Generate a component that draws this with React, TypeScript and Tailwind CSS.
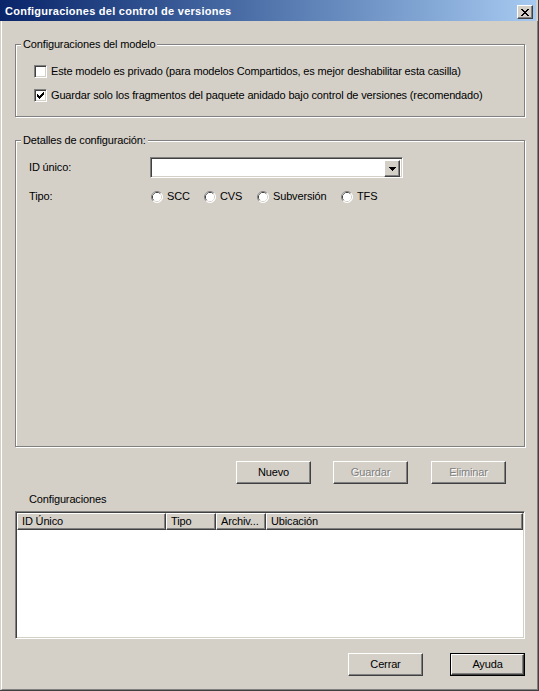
import React from "react";

const raised =
  "border border-t-white border-l-white border-r-[#404040] border-b-[#404040] shadow-[inset_-1px_-1px_0_#808080]";
const sunken =
  "border border-t-[#808080] border-l-[#808080] border-r-white border-b-white shadow-[inset_1px_1px_0_#404040,inset_-1px_-1px_0_#d4d0c8]";

// pixel glyphs drawn as rows of rects
function PixelGlyph({ rows, color = "#000" }: { rows: string[]; color?: string }) {
  const w = rows[0].length;
  const h = rows.length;
  return (
    <svg width={w} height={h} viewBox={`0 0 ${w} ${h}`} shapeRendering="crispEdges">
      {rows.flatMap((r, y) =>
        r.split("").map((c, x) =>
          c === "X" ? <rect key={`${x}-${y}`} x={x} y={y} width={1} height={1} fill={color} /> : null
        )
      )}
    </svg>
  );
}

const closeX = ["XX....XX", ".XX..XX.", "..XXXX..", "...XX...", "..XXXX..", ".XX..XX.", "XX....XX"];
const tick = ["......X", ".....XX", "X...XXX", "XX.XXX.", "XXXXX..", ".XXX...", "..X...."];
const arrow = ["XXXXXXX", ".XXXXX.", "..XXX..", "...X..."];

function Checkbox({ checked }: { checked?: boolean }) {
  return (
    <div className={`w-[13px] h-[13px] bg-white flex items-center justify-center shrink-0 ${sunken}`}>
      {checked && <PixelGlyph rows={tick} />}
    </div>
  );
}

function Radio() {
  return (
    <svg width="12" height="12" viewBox="0 0 12 12" className="shrink-0">
      <circle cx="6" cy="6" r="5.5" fill="#fff" />
      <path d="M2.11 9.89 A5.5 5.5 0 0 1 9.89 2.11" stroke="#808080" fill="none" />
      <path d="M9.89 2.11 A5.5 5.5 0 0 1 2.11 9.89" stroke="#fff" fill="none" />
      <path d="M2.82 9.18 A4.5 4.5 0 0 1 9.18 2.82" stroke="#404040" fill="none" />
      <path d="M9.18 2.82 A4.5 4.5 0 0 1 2.82 9.18" stroke="#d4d0c8" fill="none" />
      <circle cx="6" cy="6" r="4" fill="#fff" />
    </svg>
  );
}

function Button({ label, disabled, isDefault }: { label: string; disabled?: boolean; isDefault?: boolean }) {
  const inner = (
    <div
      className={`flex-1 flex items-center justify-center ${raised} ${
        disabled ? "text-[#808080] [text-shadow:1px_1px_0_#fff]" : "text-black"
      }`}
    >
      {label}
    </div>
  );
  return (
    <div className={`w-[75px] h-[23px] flex ${isDefault ? "border border-black" : ""}`}>{inner}</div>
  );
}

function GroupBox({
  legend,
  className,
  children,
}: {
  legend: string;
  className: string;
  children: React.ReactNode;
}) {
  return (
    <div
      className={`relative ml-[13px] w-[510px] border border-[#808080] shadow-[inset_1px_1px_0_#fff,1px_1px_0_#fff] ${className}`}
    >
      <span className="absolute -top-[7px] left-[5px] px-[2px] bg-[#d4d0c8] leading-[13px]">{legend}</span>
      {children}
    </div>
  );
}

export default function App() {
  return (
    <div className="w-[539px] h-[691px] bg-[#d4d0c8] flex flex-col border-r border-b border-r-[#404040] border-b-[#404040] font-['Liberation_Sans',Arial,sans-serif] text-[11px] leading-[13px] tracking-[-0.15px] text-black">
      {/* title bar */}
      <div className="h-[21px] mr-[2px] flex items-start bg-linear-to-r from-[#0a246a] to-[#a6caf0] pl-[5px] pr-[3px]">
        <span className="flex-1 font-bold text-white mt-[5px] tracking-[0.25px]">
          Configuraciones del control de versiones
        </span>
        <div className={`w-[16px] h-[14px] mt-[5px] bg-[#d4d0c8] flex items-center justify-center ${raised}`}>
          <PixelGlyph rows={closeX} />
        </div>
      </div>

      <div className="flex-1 flex flex-col ml-px border-l border-white border-r border-b border-r-[#808080] border-b-[#808080]">
        <GroupBox legend="Configuraciones del modelo" className="mt-[23px] h-[73px] pt-[20px] pl-[18px]">
          <div className="flex flex-col gap-[11px]">
            <div className="h-[13px] flex items-center gap-[4px]">
              <Checkbox />
              <span>Este modelo es privado (para modelos Compartidos, es mejor deshabilitar esta casilla)</span>
            </div>
            <div className="h-[13px] flex items-center gap-[4px]">
              <Checkbox checked />
              <span>Guardar solo los fragmentos del paquete anidado bajo control de versiones (recomendado)</span>
            </div>
          </div>
        </GroupBox>

        <GroupBox legend="Detalles de configuración:" className="mt-[23px] h-[307px] pt-[16px] pl-[13px]">
          <div className="h-[21px] flex items-center">
            <span className="w-[121px]">ID único:</span>
            <div className={`w-[253px] h-[21px] bg-white flex justify-end p-[2px] ${sunken}`}>
              <div className={`w-[16px] h-[17px] bg-[#d4d0c8] flex items-center justify-center ${raised}`}>
                <PixelGlyph rows={arrow} />
              </div>
            </div>
          </div>
          <div className="mt-[12px] h-[13px] flex items-center">
            <span className="w-[122px]">Tipo:</span>
            <div className="w-[53px] flex items-center gap-[4px]">
              <Radio />
              <span>SCC</span>
            </div>
            <div className="w-[53px] flex items-center gap-[4px]">
              <Radio />
              <span>CVS</span>
            </div>
            <div className="w-[84px] flex items-center gap-[4px]">
              <Radio />
              <span>Subversión</span>
            </div>
            <div className="flex items-center gap-[4px]">
              <Radio />
              <span>TFS</span>
            </div>
          </div>
        </GroupBox>

        <div className="mt-[14px] flex justify-end pr-[31px] gap-[22px]">
          <Button label="Nuevo" />
          <Button label="Guardar" disabled />
          <div className="ml-px">
            <Button label="Eliminar" disabled />
          </div>
        </div>

        <span className="mt-[9px] ml-[27px]">Configuraciones</span>

        <div className={`mt-[5px] ml-[13px] w-[510px] h-[128px] bg-white p-[1px] ${sunken}`}>
          <div className="h-[17px] flex bg-[#d4d0c8]">
            <div className={`w-[149px] pl-[4px] flex items-center ${raised}`}>ID Único</div>
            <div className={`w-[50px] pl-[4px] flex items-center ${raised}`}>Tipo</div>
            <div className={`w-[50px] pl-[4px] flex items-center ${raised}`}>Archiv...</div>
            <div className={`flex-1 pl-[4px] flex items-center ${raised}`}>Ubicación</div>
          </div>
        </div>

        <div className="mt-[14px] flex justify-end pr-[12px] gap-[27px]">
          <Button label="Cerrar" />
          <Button label="Ayuda" isDefault />
        </div>
      </div>
    </div>
  );
}
